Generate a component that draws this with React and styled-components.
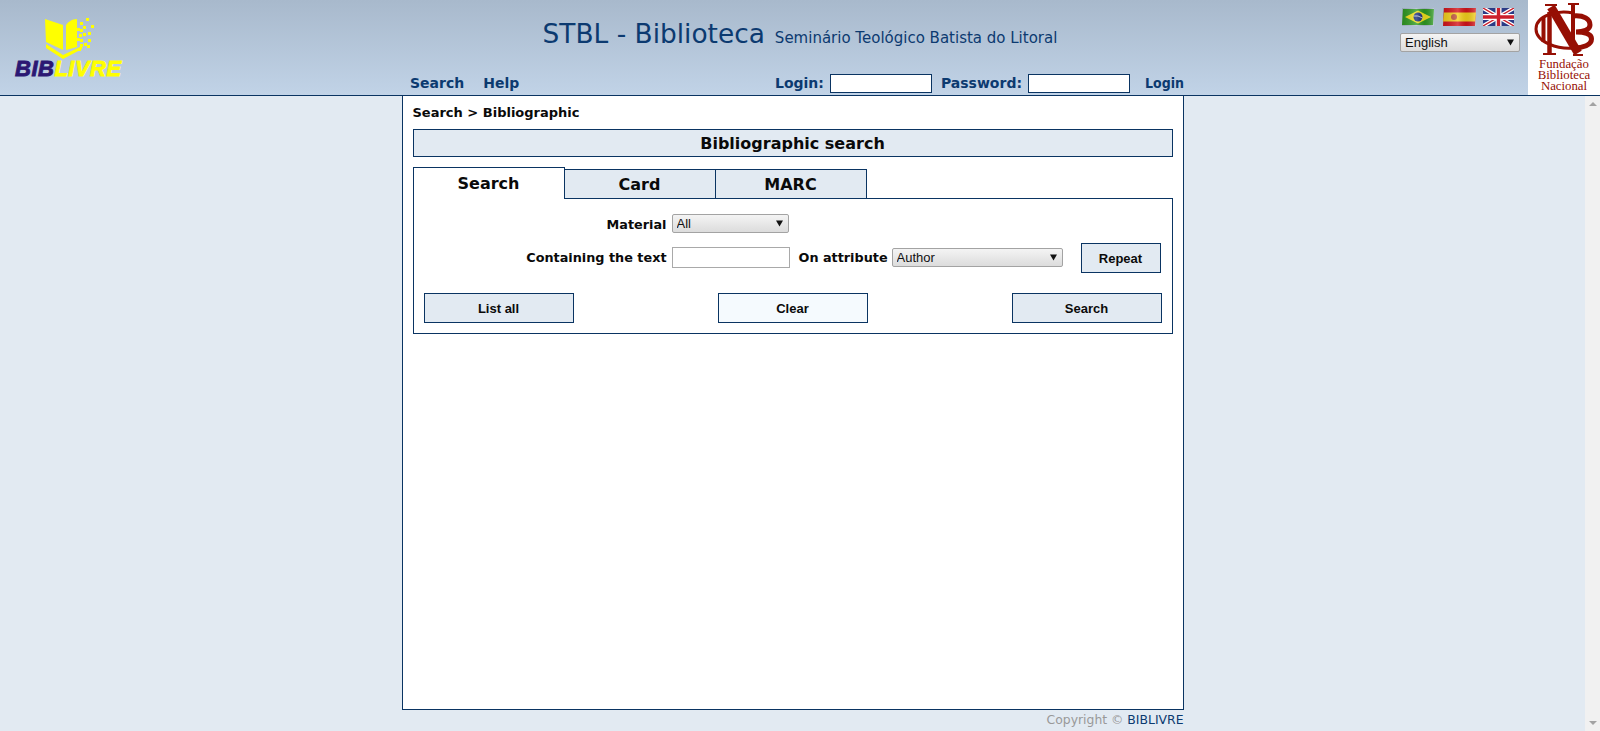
import React from 'react';
import styled, { createGlobalStyle } from 'styled-components';

const navy = '#0a3462';
const pale = '#e2eaf2';
const arrow = "url(\"data:image/svg+xml,%3Csvg xmlns='http://www.w3.org/2000/svg' width='7' height='7'%3E%3Cpath d='M0 0.5h7l-3.5 6z' fill='%23111'/%3E%3C/svg%3E\")";

const GlobalStyle = createGlobalStyle`
  html, body {
    margin: 0;
    height: 100%;
    overflow: hidden;
    background: ${pale};
    font-family: "DejaVu Sans", sans-serif;
  }
`;

const Header = styled.header`
  display: flex;
  height: 95px;
  border-bottom: 1px solid ${navy};
  background: linear-gradient(#a8b9cc, #c1d3e7);
`;

const LogoCol = styled.div`
  width: 402px;
  flex: none;
  padding: 15px 0 0 15px;
  box-sizing: border-box;
`;

const BookIcon = styled.svg`
  display: block;
  margin-left: 29px;
  width: 50px;
  height: 44px;
`;

const LogoText = styled.div`
  font: italic 900 22px/20px "Liberation Sans", sans-serif;
  -webkit-text-stroke: 0.9px currentColor;
  letter-spacing: 0.5px;
  color: #2b1873;

  span {
    color: #ffff00;
  }
`;

const CenterCol = styled.div`
  width: 796px;
  flex: none;
  display: flex;
  flex-direction: column;
`;

const TitleRow = styled.div`
  display: flex;
  justify-content: center;
  align-items: baseline;
  gap: 10px;
  padding-top: 18px;
  height: 50px;
  box-sizing: border-box;
  color: #0c3a70;
  font-size: 26.4px;
  line-height: 32px;
  white-space: nowrap;
`;

const Subtitle = styled.span`
  font-size: 15px;
`;

const NavRow = styled.nav`
  display: flex;
  align-items: center;
  height: 20px;
  margin-top: 23px;
  padding: 0 14px 0 8px;
  color: #0c3a70;
  font-size: 14px;
  font-weight: 700;
`;

const NavLink = styled.span`
  margin-right: 19px;
`;

const LoginBlock = styled.div`
  display: flex;
  align-items: center;
  margin-left: auto;
`;

const LoginInput = styled.input`
  width: 102px;
  height: 19px;
  box-sizing: border-box;
  margin: 0 ${(p) => p.$mr}px 0 6px;
  padding: 0 2px;
  border: 1px solid ${navy};
  background: #fff;
`;

const LoginLink = styled.span`
  margin-left: 6px;
  font-family: "DejaVu Sans Condensed", "DejaVu Sans", sans-serif;
`;

const LangCol = styled.div`
  width: 330px;
  flex: none;
  padding-left: 202px;
  box-sizing: border-box;
`;

const Flags = styled.div`
  display: flex;
  align-items: center;
  height: 18px;
  margin: 8px 0 7px 2px;
`;

const Flag = styled.svg`
  display: block;
  height: 18px;
  width: ${(p) => p.$w}px;
  margin-left: ${(p) => p.$ml || 0}px;
`;

const BaseSelect = styled.select`
  appearance: none;
  display: block;
  box-sizing: border-box;
  margin: 0;
  padding: 0 0 0 4px;
  width: ${(p) => p.$w}px;
  height: 19px;
  border: 1px solid #a3a3a3;
  border-radius: 2px;
  color: #111;
  font: 13px "Liberation Sans", sans-serif;
  background: ${arrow} no-repeat right 5px center, linear-gradient(#f4f4f4, #dcdcdc);
`;

const BnCol = styled.div`
  flex: 1;
  background: #fff;
  text-align: center;
  color: #960f04;
  font: 12.8px/11px "Liberation Serif", serif;
`;

const BnMark = styled.svg`
  display: block;
  width: 72px;
  height: 59px;
`;

const Body = styled.div`
  display: flex;
  height: 635px;
`;

const ScrollArea = styled.main`
  flex: 1;
  display: flex;
  flex-direction: column;
  align-items: center;
`;

const Sheet = styled.div`
  width: 782px;
  height: 614px;
  box-sizing: border-box;
  padding: 0 10px;
  background: #fff;
  border: 1px solid ${navy};
  border-top: 0;
`;

const Crumb = styled.div`
  font-size: 13px;
  font-weight: 700;
  line-height: 16px;
  color: #0a0a0a;
  padding-top: 9px;
  margin-bottom: 8px;
`;

const PageTitle = styled.h1`
  margin: 0 0 10px;
  height: 28px;
  box-sizing: border-box;
  border: 1px solid ${navy};
  background: ${pale};
  text-align: center;
  font-size: 16px;
  font-weight: 700;
  line-height: 28px;
  color: #0a0a0a;
`;

const Tabs = styled.div`
  display: flex;
  align-items: flex-end;
  position: relative;
  z-index: 1;
  margin-bottom: -1px;
`;

const Tab = styled.div`
  box-sizing: border-box;
  width: 152px;
  height: ${(p) => (p.$active ? 32 : 30)}px;
  margin-left: ${(p) => (p.$active ? 0 : -1)}px;
  border: 1px solid ${navy};
  border-bottom: ${(p) => (p.$active ? 0 : `1px solid ${navy}`)};
  background: ${(p) => (p.$active ? '#fff' : pale)};
  text-align: center;
  font-size: 16px;
  font-weight: 700;
  line-height: ${(p) => (p.$active ? 32 : 29)}px;
  color: #0a0a0a;
`;

const Panel = styled.section`
  box-sizing: border-box;
  height: 136px;
  border: 1px solid ${navy};
  padding: 15px 10px 0;
`;

const FormRow = styled.div`
  display: flex;
  align-items: center;
  box-sizing: border-box;
  height: ${(p) => p.$h}px;
  padding-bottom: ${(p) => p.$pb || 0}px;
  margin-bottom: ${(p) => p.$mb || 0}px;
`;

const Label = styled.label`
  width: ${(p) => p.$w}px;
  margin-right: ${(p) => p.$mr}px;
  margin-left: ${(p) => p.$ml || 0}px;
  padding-top: ${(p) => p.$pt || 0}px;
  flex: none;
  text-align: right;
  font-size: 12.8px;
  font-weight: 700;
  color: #0a0a0a;
  white-space: nowrap;
`;

const TextInput = styled.input`
  width: 118px;
  height: 21px;
  box-sizing: border-box;
  margin: 0;
  border: 1px solid #a9a9a9;
  background: #fff;
`;

const Btn = styled.button`
  box-sizing: border-box;
  flex: none;
  align-self: flex-start;
  width: ${(p) => p.$w || 150}px;
  height: 30px;
  margin: 0 0 0 ${(p) => p.$ml || 0}px;
  padding: 0;
  border: 1px solid ${navy};
  background: ${(p) => (p.$light ? '#f5fafe' : pale)};
  color: #0a0a0a;
  font: 700 13px "Liberation Sans", sans-serif;
`;

const ButtonRow = styled.div`
  display: flex;
  justify-content: space-between;
`;

const Footer = styled.footer`
  width: 782px;
  text-align: right;
  font-size: 12.4px;
  line-height: 15px;
  padding-top: 2px;
  color: #999;

  span {
    color: #0c3a70;
  }
`;

const ScrollBar = styled.aside`
  width: 15px;
  display: flex;
  flex-direction: column;
  justify-content: space-between;
  align-items: center;
  padding: 6px 0;
  box-sizing: border-box;
  background: #f1f1f1;
`;

const ScrollArrow = styled.i`
  width: 0;
  height: 0;
  border-left: 4px solid transparent;
  border-right: 4px solid transparent;
  border-bottom: ${(p) => (p.$down ? 0 : '4px solid #a3a3a3')};
  border-top: ${(p) => (p.$down ? '4px solid #a3a3a3' : 0)};
`;

const dots = [
  [42, 3], [36, 7], [47, 10], [39, 11], [33, 13], [36, 14], [44, 17], [39, 18], [35, 19],
  [33, 23], [36, 24], [44, 24], [40, 28], [43, 30], [36, 29], [34, 33],
];

const BookLogo = () => (
  <BookIcon viewBox="0 0 50 44">
    <path d="M1 4 L19 10 V35 L2 27 Z" fill="#ffff00" />
    <path d="M22 10 C24 7 28 4 33 4 L33 32 L22 35 Z" fill="#ffff00" />
    <path d="M2 29 L19 40 L38 31 V34 L19 44 L2 33 Z" fill="#ffff00" />
    {dots.map(([x, y]) => (
      <rect key={`${x}-${y}`} x={x} y={y} width="3" height="3" fill="#ffff00" />
    ))}
  </BookIcon>
);

const BnLogo = () => (
  <BnMark viewBox="0 0 72 59">
    <g fill="none" stroke="#960f04">
      <path d="M23 7 L50 53" strokeWidth="8.5" />
      <path d="M21.5 12 V53" strokeWidth="4.5" />
      <path d="M15.5 17 V42" strokeWidth="4" />
      <path d="M45 13 C30 10 8 15 8 29 C8 42 30 50 47 48" strokeWidth="3" />
      <path d="M45 5 V46" strokeWidth="4" />
      <path d="M17 5 H29 M40 4 H51 M15 54 H28 M45 55 H55" strokeWidth="2" />
      <path d="M45 16 C56 15 62 19 62 25 C62 30 55 32 48 32 C57 32 63.5 34 63.5 39 C63.5 45 55 48 46 48" strokeWidth="5" />
    </g>
  </BnMark>
);

const BrazilFlag = () => (
  <Flag $w={32} viewBox="0 0 32 18">
    <defs>
      <linearGradient id="shine" x1="0" x2="1" y1="0" y2="0">
        <stop offset="0" stopColor="#000" stopOpacity="0.12" />
        <stop offset="0.45" stopColor="#fff" stopOpacity="0.2" />
        <stop offset="0.7" stopColor="#000" stopOpacity="0.1" />
        <stop offset="1" stopColor="#fff" stopOpacity="0.25" />
      </linearGradient>
    </defs>
    <path d="M1 1 H32 L31 17 H0 Z" fill="#2f9a22" />
    <path d="M16 2.5 L29 9 L16 15.5 L3 9 Z" fill="#f4e21a" />
    <circle cx="16" cy="9" r="4.5" fill="#1d2f7c" />
    <path d="M11.5 8 Q16 7 20.5 10" stroke="#eee" strokeWidth="0.8" fill="none" />
    <rect width="32" height="18" fill="url(#shine)" />
  </Flag>
);

const SpainFlag = () => (
  <Flag $w={33} $ml={9} viewBox="0 0 33 18">
    <path d="M1 0 H33 L32 18 H0 Z" fill="#d5141a" />
    <path d="M1 4.5 H33 L32 13.5 H0 Z" fill="#f6d21c" />
    <circle cx="11" cy="9" r="3" fill="#c0543a" />
    <rect width="33" height="18" fill="url(#shine)" />
  </Flag>
);

const UkFlag = () => (
  <Flag $w={31} $ml={7} viewBox="0 0 31 18">
    <rect width="31" height="18" fill="#2b3b86" />
    <path d="M0 0 L31 18 M31 0 L0 18" stroke="#fff" strokeWidth="4" />
    <path d="M0 0 L31 18 M31 0 L0 18" stroke="#cc1f2c" strokeWidth="1.4" />
    <path d="M15.5 0 V18 M0 9 H31" stroke="#fff" strokeWidth="6" />
    <path d="M15.5 0 V18 M0 9 H31" stroke="#cc1f2c" strokeWidth="3.4" />
  </Flag>
);

export default function App() {
  return (
    <>
      <GlobalStyle />
      <Header>
        <LogoCol>
          <BookLogo />
          <LogoText>BIB<span>LIVRE</span></LogoText>
        </LogoCol>
        <CenterCol>
          <TitleRow>
            STBL - Biblioteca
            <Subtitle>Seminário Teológico Batista do Litoral</Subtitle>
          </TitleRow>
          <NavRow>
            <NavLink>Search</NavLink>
            <NavLink>Help</NavLink>
            <LoginBlock>
              Login:
              <LoginInput type="text" $mr={9} />
              Password:
              <LoginInput type="password" $mr={9} />
              <LoginLink>Login</LoginLink>
            </LoginBlock>
          </NavRow>
        </CenterCol>
        <LangCol>
          <Flags>
            <BrazilFlag />
            <SpainFlag />
            <UkFlag />
          </Flags>
          <BaseSelect $w={120} defaultValue="English">
            <option>English</option>
            <option>Português</option>
            <option>Español</option>
          </BaseSelect>
        </LangCol>
        <BnCol>
          <BnLogo />
          Fundação<br />Biblioteca<br />Nacional
        </BnCol>
      </Header>
      <Body>
        <ScrollArea>
          <Sheet>
            <Crumb>Search &gt; Bibliographic</Crumb>
            <PageTitle>Bibliographic search</PageTitle>
            <Tabs>
              <Tab $active>Search</Tab>
              <Tab>Card</Tab>
              <Tab>MARC</Tab>
            </Tabs>
            <Panel>
              <FormRow $h={19} $mb={10}>
                <Label $w={243} $mr={5} $pt={2}>Material</Label>
                <BaseSelect $w={117} defaultValue="All">
                  <option>All</option>
                </BaseSelect>
              </FormRow>
              <FormRow $h={30} $pb={2} $mb={20}>
                <Label $w={243} $mr={5}>Containing the text</Label>
                <TextInput type="text" />
                <Label $w={89} $mr={4} $ml={9}>On attribute</Label>
                <BaseSelect $w={171} defaultValue="Author">
                  <option>Author</option>
                </BaseSelect>
                <Btn $w={80} $ml={18}>Repeat</Btn>
              </FormRow>
              <ButtonRow>
                <Btn>List all</Btn>
                <Btn $light>Clear</Btn>
                <Btn>Search</Btn>
              </ButtonRow>
            </Panel>
          </Sheet>
          <Footer>Copyright © <span>BIBLIVRE</span></Footer>
        </ScrollArea>
        <ScrollBar>
          <ScrollArrow />
          <ScrollArrow $down />
        </ScrollBar>
      </Body>
    </>
  );
}
